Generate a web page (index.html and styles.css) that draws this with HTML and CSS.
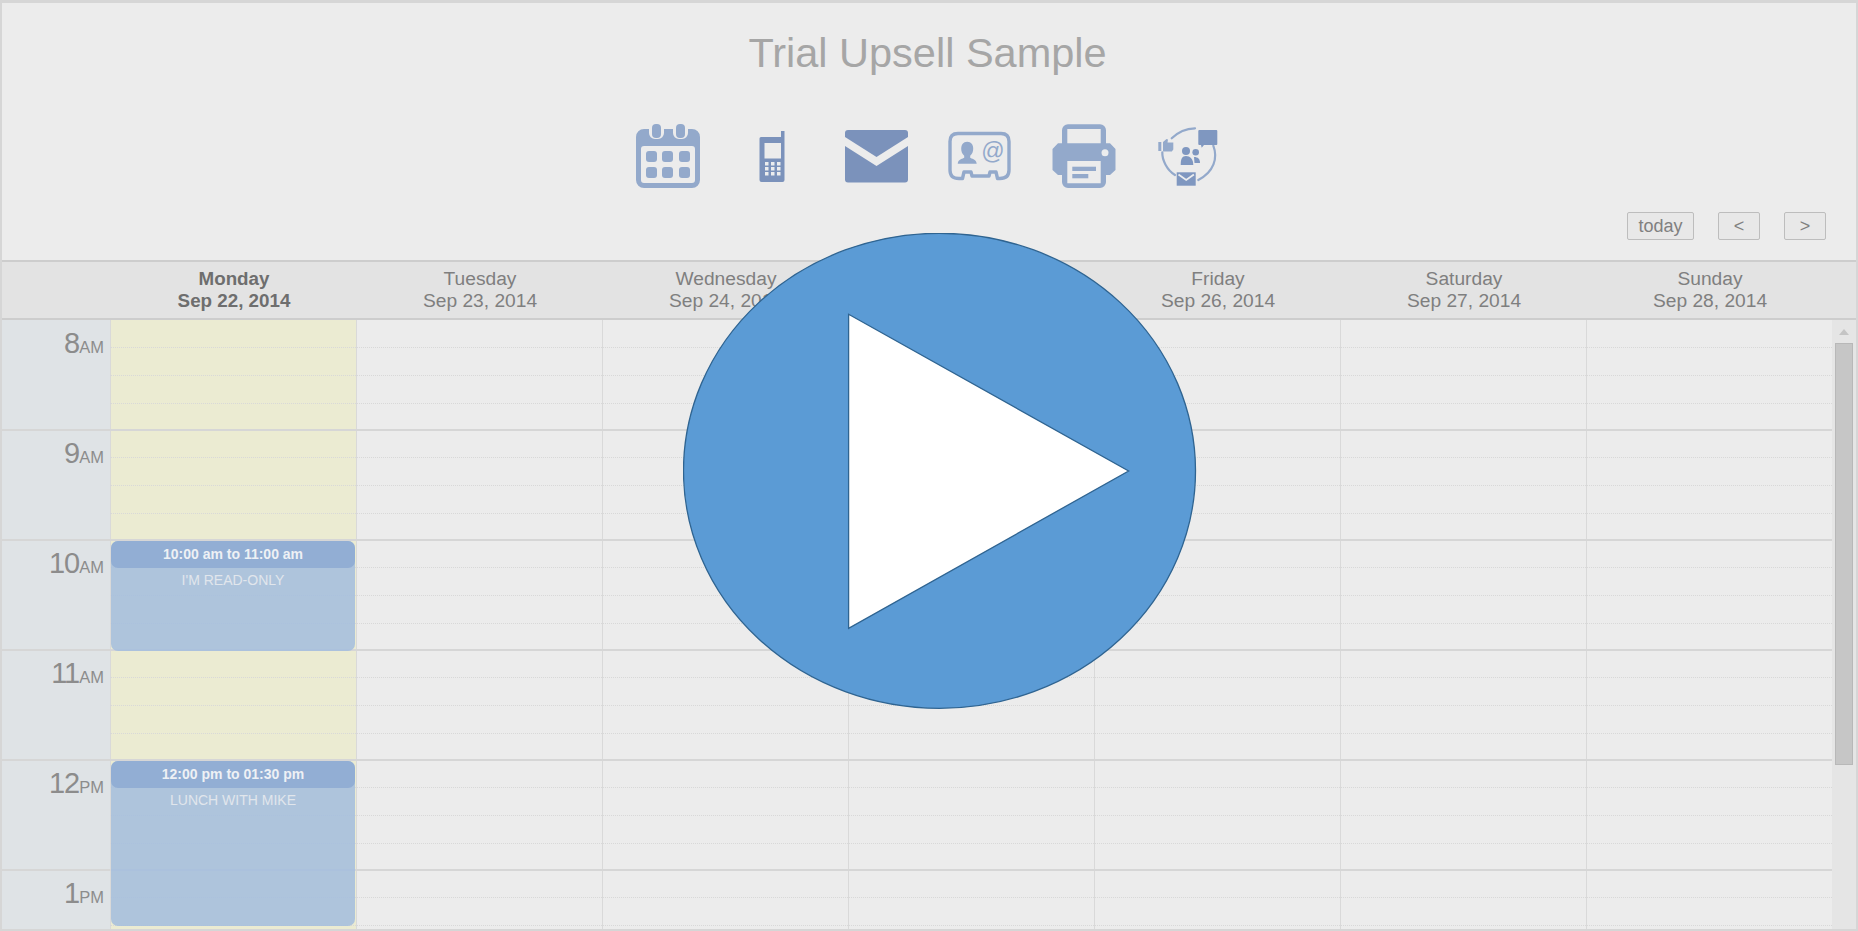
FILE: index.html
```html
<!DOCTYPE html>
<html lang="en">
<head>
  <meta charset="UTF-8">
  <title>Trial Upsell Sample</title>
  <link rel="stylesheet" href="styles.css">
</head>
<body>
  <div class="page">
    <header class="top">
      <h1 class="title">Trial Upsell Sample</h1>
      <div class="icons">
        <svg class="icon" width="64" height="64" viewBox="0 0 64 64"><g fill="#93a9cb"><path fill-rule="evenodd" d="M8 5h5v4a6 6 0 0 0 6 6h3a6 6 0 0 0 6-6V5h9v4a6 6 0 0 0 6 6h3a6 6 0 0 0 6-6V5h4a8 8 0 0 1 8 8v43a8 8 0 0 1-8 8H8a8 8 0 0 1-8-8V13a8 8 0 0 1 8-8zM5 25v31a3 3 0 0 0 3 3h48a3 3 0 0 0 3-3V25a3 3 0 0 0-3-3H8a3 3 0 0 0-3 3z"/><rect x="16" y="0" width="9" height="14" rx="4"/><rect x="40" y="0" width="9" height="14" rx="4"/><rect x="10" y="27" width="11" height="11" rx="3"/><rect x="26" y="27" width="11" height="11" rx="3"/><rect x="43" y="27" width="11" height="11" rx="3"/><rect x="10" y="43" width="11" height="11" rx="3"/><rect x="26" y="43" width="11" height="11" rx="3"/><rect x="43" y="43" width="11" height="11" rx="3"/></g></svg>
        <svg class="icon" width="64" height="64" viewBox="0 0 64 64"><path fill="#7b92bb" fill-rule="evenodd" d="M21 13H41V7h3.500v49a2 2 0 0 1-2 2H21.500a2 2 0 0 1-2-2V14.500a1.500 1.500 0 0 1 1.500-1.500zM24.500 19V34.500H41V19z"/><g fill="#ecedee"><rect x="25" y="38" width="3.500" height="3.500"/><rect x="31" y="38" width="3.500" height="3.500"/><rect x="37" y="38" width="3.500" height="3.500"/><rect x="25" y="43" width="3.500" height="3.500"/><rect x="31" y="43" width="3.500" height="3.500"/><rect x="37" y="43" width="3.500" height="3.500"/><rect x="25" y="48" width="3.500" height="3.500"/><rect x="31" y="48" width="3.500" height="3.500"/><rect x="37" y="48" width="3.500" height="3.500"/></g></svg>
        <svg class="icon" width="64" height="64" viewBox="0 0 64 64"><g fill="#7b92bb"><path d="M4 6h57a3 3 0 0 1 3 3v4L32.500 33 1 13V9a3 3 0 0 1 3-3z"/><path d="M1 22l31.500 20L64 22v33.500a3 3 0 0 1-3 3H4a3 3 0 0 1-3-3z"/></g></svg>
        <svg class="icon" width="64" height="64" viewBox="0 0 64 64"><path fill="none" stroke="#93a9cb" stroke-width="3.400" stroke-linejoin="round" d="M10 9.500H53Q61 9.500 61 17.500V46Q61 54.500 52 54.500H49.500L48 48H42L41 52H24L23 48H16L14.500 54.500H11Q2 54.500 2 46V17.500Q2 9.500 10 9.500z"/><path fill="#93a9cb" d="M19.200 17.700c-4 0-6 3-6 7 0 3 1 5 3 7v2c-1 1-6 1-6.500 6h19c-.5-5-5.500-5-6.500-6v-2c2-2 3-4 3-7 0-4-2-7-6-7z"/><text class="at" x="45" y="35" text-anchor="middle">@</text></svg>
        <svg class="icon" width="64" height="64" viewBox="0 0 64 64"><path fill="#93a9cb" fill-rule="evenodd" d="M16 .3H48A6 6 0 0 1 54 6.300V19.300H58L63.500 25V46L58 51H54V58A6 6 0 0 1 48 64H16A6 6 0 0 1 10 58V51H6L.5 46V25L6 19.300H10V6.300A6 6 0 0 1 16 .3zM15.300 5V19.300H48.700V5zM15.300 37V59.300H48.700V37z"/><circle cx="53" cy="28.700" r="3.500" fill="#ecedee"/><rect x="20.300" y="42.700" width="23.700" height="4.300" fill="#93a9cb"/><rect x="20.300" y="50" width="16" height="4.300" fill="#93a9cb"/></svg>
        <svg class="icon" width="64" height="64" viewBox="0 0 64 64"><g fill="none" stroke="#93a9cb" stroke-width="2.200" stroke-linecap="round"><path d="M15.700 14.300C22 8 30 4.500 39 4.300"/><path d="M57.300 21.700C62 34 58 48 42.300 56"/><path d="M6.300 28.300C6 36 11 46 19 51"/></g><path fill="#7f97c0" d="M43.300 6h17a1 1 0 0 1 1 1v13a1 1 0 0 1-1 1H48l-2.300 2.700-.7-2.700h-1.700a1 1 0 0 1-1-1V7a1 1 0 0 1 1-1z"/><path fill="#93a9cb" d="M2.300 18h3v9h-3zM7 18l3.500-3 1.500.5-.5 3h5.800v7l-1.500 2H7z"/><g fill="#7f97c0"><circle cx="30" cy="27" r="4"/><path d="M24.700 41c0-6 1.300-9 5.300-9s7.300 3 7.300 9z"/><circle cx="39.700" cy="28.300" r="3.300"/><path d="M38 33c4 0 6 2 6 6h-5.500z"/></g><path fill="#7f97c0" d="M20.700 48.300h19v13.400h-19z"/><path fill="none" stroke="#ecedee" stroke-width="1.800" d="M22.500 50.500l7.700 5.500 7.700-5.500"/></svg>
      </div>
      <div class="nav">
        <button class="btn btn-today">today</button>
        <button class="btn">&lt;</button>
        <button class="btn">&gt;</button>
      </div>
    </header>

    <div class="daysbar">
      <div class="gutter"></div>
      <div class="day today"><div>Monday</div><div>Sep 22, 2014</div></div>
      <div class="day"><div>Tuesday</div><div>Sep 23, 2014</div></div>
      <div class="day"><div>Wednesday</div><div>Sep 24, 2014</div></div>
      <div class="day"><div>Thursday</div><div>Sep 25, 2014</div></div>
      <div class="day"><div>Friday</div><div>Sep 26, 2014</div></div>
      <div class="day"><div>Saturday</div><div>Sep 27, 2014</div></div>
      <div class="day"><div>Sunday</div><div>Sep 28, 2014</div></div>
    </div>

    <div class="body">
      <div class="hours">
        <div class="hour"><span class="num">8</span><span class="ampm">AM</span></div>
        <div class="hour"><span class="num">9</span><span class="ampm">AM</span></div>
        <div class="hour"><span class="num">10</span><span class="ampm">AM</span></div>
        <div class="hour"><span class="num">11</span><span class="ampm">AM</span></div>
        <div class="hour"><span class="num">12</span><span class="ampm">PM</span></div>
        <div class="hour"><span class="num">1</span><span class="ampm">PM</span></div>
      </div>
      <div class="grid">
        <div class="col col-today">
          <div class="event event-ro">
            <div class="event-time">10:00 am to 11:00 am</div>
            <div class="event-title">I'M READ-ONLY</div>
          </div>
          <div class="event event-lunch">
            <div class="event-time">12:00 pm to 01:30 pm</div>
            <div class="event-title">LUNCH WITH MIKE</div>
          </div>
        </div>
        <div class="col"></div>
        <div class="col"></div>
        <div class="col"></div>
        <div class="col"></div>
        <div class="col"></div>
        <div class="col col-last"></div>

        <!-- hour and quarter lines, over the columns and under the events -->
        <div class="rows">
          <div class="row"><div class="slot"></div><div class="slot"></div><div class="slot"></div></div>
          <div class="row"><div class="slot"></div><div class="slot"></div><div class="slot"></div></div>
          <div class="row"><div class="slot"></div><div class="slot"></div><div class="slot"></div></div>
          <div class="row"><div class="slot"></div><div class="slot"></div><div class="slot"></div></div>
          <div class="row"><div class="slot"></div><div class="slot"></div><div class="slot"></div></div>
          <div class="row"><div class="slot"></div><div class="slot"></div><div class="slot"></div></div>
        </div>
      </div>
      <div class="scrollbar">
        <div class="arrow"></div>
        <div class="thumb"></div>
      </div>
    </div>

    <svg class="play" width="514" height="478" viewBox="0 0 514 478">
      <ellipse cx="256.500" cy="237.800" rx="256" ry="237.500" fill="#5b9bd5" stroke="#2f6491" stroke-width="1.300"/>
      <path d="M165.600 81.300L445.600 238 165.600 395.300z" fill="#fff" stroke="#2f6491" stroke-width="1.300"/>
    </svg>
  </div>
</body>
</html>
```

FILE: styles.css
```css
* {
  box-sizing: border-box;
}

html, body {
  margin: 0;
  height: 100%;
  overflow: hidden;
}

body {
  font-family: "Liberation Sans", Arial, sans-serif;
  background: #ececec;
  color: #7f7f7f;
}

.page {
  position: relative;
  width: 1858px;
  height: 931px;
  border: 2px solid #d6d6d6;
  border-top-width: 3px;
  overflow: hidden;
}

/* top part */
.top {
  height: 257px;
  padding-top: 26px;
  display: flex;
  flex-direction: column;
  align-items: center;
}

.title {
  margin: 0;
  padding-right: 3px;
  font-size: 41.500px;
  font-weight: normal;
  line-height: 48px;
  color: #a6a6a6;
}

.icons {
  display: flex;
  gap: 40px;
  margin-top: 47px;
  padding-right: 2px;
}

.icon {
  display: block;
}

.at {
  font-family: "Liberation Sans", Arial, sans-serif;
  font-size: 23px;
  fill: #93a9cb;
}

.nav {
  align-self: flex-end;
  display: flex;
  gap: 24px;
  margin-top: 24px;
  padding-right: 30px;
}

.btn {
  width: 42px;
  height: 28px;
  padding: 0;
  font-family: "Liberation Sans", Arial, sans-serif;
  font-size: 18px;
  color: #808080;
  background: #e8e8e8;
  border: 1.500px solid #bdbdbd;
  border-radius: 2px;
}

.btn-today {
  width: 67px;
}

/* day names */
.daysbar {
  display: flex;
  height: 60px;
  background: #e3e3e3;
  border-top: 2px solid #cdcdcd;
  border-bottom: 2px solid #cdcdcd;
  font-size: 19.200px;
  line-height: 22px;
  text-align: center;
}

.gutter {
  width: 109px;
}

.day {
  width: 246px;
  padding-top: 6px;
}

.day.today {
  font-size: 18.800px;
  font-weight: bold;
  color: #6e6e6e;
}

/* calendar body */
.body {
  display: flex;
  height: 609px;
  overflow: hidden;
}

.hours {
  width: 109px;
  background: #dfe3e6;
  color: #8c8c8c;
}

.hour {
  height: 110px;
  border-bottom: 2px solid #d6d6d6;
  padding: 4px 6px 0 0;
  text-align: right;
  line-height: 36px;
}

.hour:first-child {
  height: 111px;
  padding-top: 5px;
}

.num {
  font-size: 29px;
  letter-spacing: -1px;
}

.ampm {
  font-size: 16.500px;
}

.grid {
  position: relative;
  display: flex;
  flex: 1;
}

.col {
  position: relative;
  flex: none;
  width: 246px;
  border-left: 1px solid #d9d9d9;
}

.col-today {
  background: #ebebd2;
}

.col-last {
  flex: 1;
}

.rows {
  position: absolute;
  top: 0;
  left: 0;
  right: 0;
  z-index: 1;
}

.row {
  height: 110px;
  border-bottom: 2px solid #d6d6d6;
}

.row:first-child {
  height: 111px;
  padding-top: 1px;
}

.slot {
  height: 28px;
  border-bottom: 1px dotted #d8d8d8;
}

.slot:first-child {
  height: 27px;
}

.event {
  position: absolute;
  left: 0;
  right: 1px;
  background: rgba(163, 189, 222, .85);
  border-radius: 7px;
  color: #e1e6ec;
  text-align: center;
  z-index: 2;
}

.event-ro {
  top: 221px;
  height: 110px;
}

.event-lunch {
  top: 441px;
  height: 165px;
}

.event-time {
  height: 27px;
  line-height: 27px;
  background: #92aed4;
  border-radius: 7px;
  font-size: 14px;
  font-weight: bold;
  color: #eef1f5;
}

.event-title {
  margin-top: 4px;
  font-size: 14px;
  line-height: 17px;
}

.scrollbar {
  flex: none;
  width: 24px;
  background: #e5e5e5;
  padding: 3px 3px 0;
}

.arrow {
  width: 0;
  height: 0;
  margin: 6px auto 8px;
  border: 5px solid transparent;
  border-top-width: 0;
  border-bottom: 6px solid #c4c4c4;
}

.thumb {
  height: 422px;
  margin-top: 2px;
  background: #c6c6c6;
  border: 1px solid #b8b8b8;
}

/* video overlay */
.play {
  position: absolute;
  left: 681px;
  top: 230px;
  z-index: 3;
}
```
